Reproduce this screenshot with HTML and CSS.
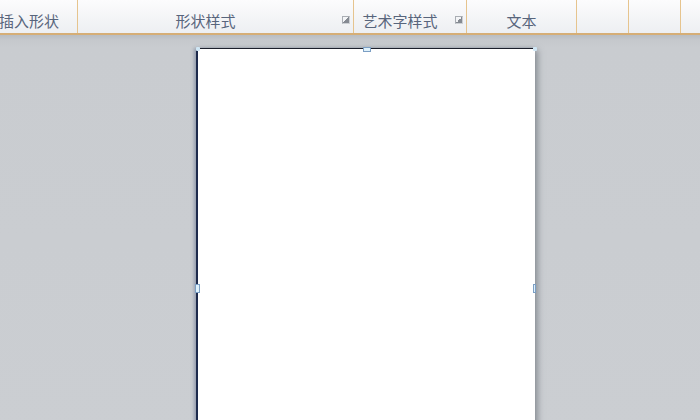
FILE: index.html
```html
<!DOCTYPE html>
<html lang="zh-CN">
<head>
    <meta charset="UTF-8">
    <title>形状样式</title>
    <link rel="stylesheet" href="styles.css">
</head>
<body>
    <div class="ribbon">
        <div class="group group-insert">
            <span class="label">插入形状</span>
        </div>
        <div class="group group-shape">
            <span class="label">形状样式</span>
            <span class="launcher"></span>
        </div>
        <div class="group group-art">
            <span class="label">艺术字样式</span>
            <span class="launcher"></span>
        </div>
        <div class="group group-text">
            <span class="label">文本</span>
        </div>
        <div class="group group-empty"></div>
        <div class="group group-empty"></div>
        <div class="group group-rest"></div>
    </div>
    <div class="workspace">
        <div class="sheet">
            <span class="handle handle-top"></span>
            <span class="handle handle-left"></span>
            <span class="handle handle-right"></span>
            <span class="corner corner-left"></span>
            <span class="corner corner-right"></span>
        </div>
    </div>
</body>
</html>
```

FILE: styles.css
```css
html,
body {
    margin: 0;
    padding: 0;
    width: 700px;
    height: 420px;
    overflow: hidden;
}

body {
    font-family: "Noto Sans CJK SC", "Microsoft YaHei", sans-serif;
    background: #c9ccd0;
}

.ribbon {
    display: flex;
    height: 33px;
    background: linear-gradient(#fcfcfd, #f3f4f6 60%, #edeff2);
    border-bottom: 2px solid #d6ae76;
    box-sizing: content-box;
    overflow: hidden;
}

.group {
    position: relative;
    display: flex;
    align-items: center;
    justify-content: center;
    box-sizing: border-box;
    height: 33px;
    border-right: 1px solid #e6c48e;
    flex-shrink: 0;
}

.label {
    font-size: 15px;
    line-height: 17px;
    color: #58657c;
    margin-top: 8px;
    white-space: nowrap;
}

.group-insert {
    width: 78px;
    justify-content: flex-start;
}

.group-insert .label {
    margin-left: -1px;
}

.group-shape {
    width: 276px;
    padding-right: 20px;
}

.group-art {
    width: 113px;
    padding-right: 20px;
}

.group-text {
    width: 110px;
}

.group-empty {
    width: 52px;
}

.group-rest {
    flex: 1;
    border-right: none;
}

.launcher {
    position: absolute;
    right: 3px;
    top: 16px;
    width: 6px;
    height: 6px;
    border: 1px solid #a9adb3;
    border-right-color: #cdd0d4;
    border-bottom-color: #cdd0d4;
    background: linear-gradient(135deg, transparent 50%, #858a92 50%);
}

.workspace {
    height: 385px;
    background: linear-gradient(#b9bdc2, #c5c8cc 5px, #c9ccd0 12px, #cbced2);
    padding-top: 13px;
    padding-left: 198px;
}

.sheet {
    position: relative;
    width: 337px;
    height: 380px;
    background: #ffffff;
    border-top: 1px solid #1b1f2b;
    border-left: 2px solid #1d2a4c;
    margin-left: -2px;
    box-shadow: 3px 2px 6px rgba(90, 96, 106, 0.55), -2px 0 3px rgba(70, 90, 130, 0.35);
}

.handle {
    position: absolute;
    box-sizing: border-box;
    background: #dff1fb;
    border: 1px solid #7c9fc4;
}

.handle-top {
    left: 165px;
    top: -2px;
    width: 8px;
    height: 5px;
}

.handle-left {
    left: -3px;
    top: 235px;
    width: 5px;
    height: 9px;
}

.handle-right {
    right: -1px;
    top: 235px;
    width: 3px;
    height: 9px;
}

.corner {
    position: absolute;
    top: -2px;
    width: 4px;
    height: 4px;
    background: #cfe6f4;
    border-radius: 1px;
}

.corner-left {
    left: -2px;
}

.corner-right {
    right: -2px;
}
```
